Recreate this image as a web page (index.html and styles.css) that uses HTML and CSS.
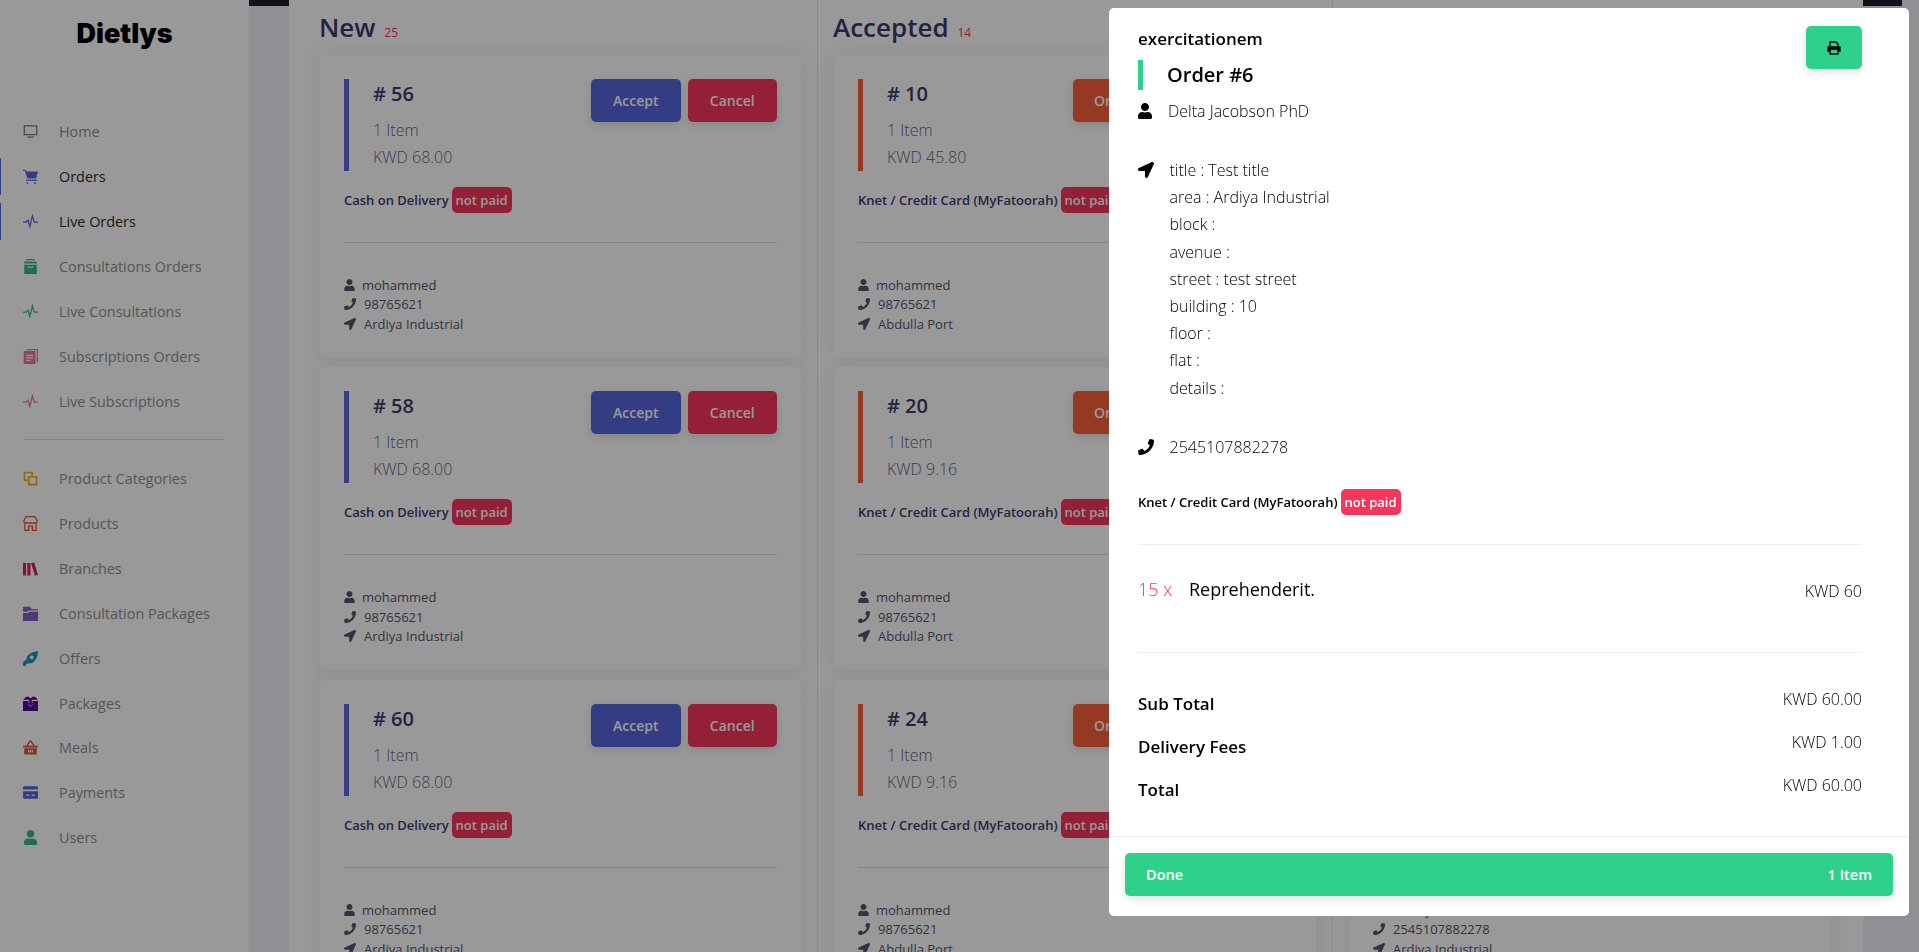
FILE: index.html
```html
<!DOCTYPE html>
<html lang="en">
<head>
    <meta charset="UTF-8">
    <meta name="viewport" content="width=device-width, initial-scale=1.0">
    <title>Dietlys</title>
    <link rel="stylesheet" href="styles.css">
</head>
<body>
    <svg class="defs" aria-hidden="true">
        <symbol id="i-user" viewBox="0 0 448 512"><path d="M224 256c70.7 0 128-57.3 128-128S294.7 0 224 0 96 57.3 96 128s57.3 128 128 128zm89.6 32h-16.7c-22.2 10.2-46.9 16-72.9 16s-50.6-5.8-72.9-16h-16.7C60.2 288 0 348.2 0 422.4V464c0 26.5 21.5 48 48 48h352c26.5 0 48-21.5 48-48v-41.6c0-74.2-60.2-134.4-134.4-134.4z"/></symbol>
        <symbol id="i-phone" viewBox="0 0 512 512"><path d="M493.4 24.6l-104-24c-11.3-2.6-22.9 3.3-27.5 13.9l-48 112c-4.2 9.8-1.4 21.3 6.9 28l60.6 49.6c-36 76.7-98.9 140.5-177.2 177.2l-49.6-60.6c-6.8-8.3-18.2-11.1-28-6.9l-112 48C3.9 366.5-2 378.1.6 389.4l24 104C27.1 504.2 36.7 512 48 512c256.1 0 464-207.5 464-464 0-11.2-7.7-20.9-18.6-23.4z"/></symbol>
        <symbol id="i-arrow" viewBox="0 0 512 512"><path d="M444.52 3.52L28.74 195.42c-47.97 22.39-31.98 92.75 19.19 92.75h175.91v175.91c0 51.17 70.36 67.17 92.75 19.19l191.9-415.78c15.99-38.39-25.59-79.97-63.97-63.97z"/></symbol>
        <symbol id="i-pulse" viewBox="0 0 24 24"><path d="M0 13h5l3-3 3 10 4-17 3 10h6" fill="none" stroke="currentColor" stroke-width="2"/></symbol>
    </svg>

    <div class="page">
        <aside class="sidebar">
            <div class="logo">Dietlys</div>
            <nav class="menu">
                <a class="menu-item"><svg class="ic ic-gray" viewBox="0 0 24 24"><path d="M1 2h22v16H1zM3 4v12h18V4zM7 20h10v2H7z" fill-rule="evenodd"/></svg>Home</a>
                <a class="menu-item active"><svg class="ic ic-blue" viewBox="0 0 24 24"><path d="M0 1h4l1 3h19l-3 11H7L3 3H0z"/><path d="M5 17h18v2H5z"/><circle cx="7" cy="22.500" r="1.500"/><circle cx="19" cy="22.500" r="1.500"/></svg>Orders</a>
                <a class="menu-item active"><svg class="ic ic-blue" viewBox="0 0 24 24"><use href="#i-pulse"/></svg>Live Orders</a>
                <a class="menu-item"><svg class="ic ic-green" viewBox="0 0 24 24"><path d="M5 0h14v2H5zM2 4h20v3H2z"/><path fill-rule="evenodd" d="M2 9h20v15H2zM8 11v2a1 1 0 0 0 1 1h6a1 1 0 0 0 1-1v-2h-1.500v1.500h-5V11z"/></svg>Consultations Orders</a>
                <a class="menu-item"><svg class="ic ic-green" viewBox="0 0 24 24"><use href="#i-pulse"/></svg>Live Consultations</a>
                <a class="menu-item"><svg class="ic ic-pink" viewBox="0 0 24 24"><path d="M6 0h18v21h-2V2H6z"/><path fill-rule="evenodd" d="M1 3h19v21H1zM5 9v2h11V9zM5 13v2h11v-2zM5 17v2h7v-2z"/></svg>Subscriptions Orders</a>
                <a class="menu-item"><svg class="ic ic-pink" viewBox="0 0 24 24"><use href="#i-pulse"/></svg>Live Subscriptions</a>
                <div class="menu-sep"></div>
                <a class="menu-item"><svg class="ic ic-yellow" viewBox="0 0 24 24"><path fill-rule="evenodd" d="M1 1h15v7h7v15H8v-7H1zM3.500 3.500v10H8V8h5.500V3.500zM10.500 10.500v10h10v-10z"/></svg>Product Categories</a>
                <a class="menu-item"><svg class="ic ic-orange" viewBox="0 0 24 24"><path fill="none" stroke="currentColor" stroke-width="2" d="M5 1h14l4 7a3.500 3.500 0 0 1-5.500 2.500 4 4 0 0 1-5.500 0 4 4 0 0 1-5.500 0A3.500 3.500 0 0 1 1 8zM3 11v12h6v-7h6v7h6V11"/></svg>Products</a>
                <a class="menu-item"><svg class="ic ic-red" viewBox="0 0 24 24"><path d="M0 3h5v20H0zM7 3h5v20H7zM13 3.500l5-1.500 6 20-5 1.500z"/></svg>Branches</a>
                <a class="menu-item"><svg class="ic ic-purple" viewBox="0 0 24 24"><path d="M0 1h11l3 4h10v2H9L7 9H0zM0 11h8l2-2h14v15H0z"/></svg>Consultation Packages</a>
                <a class="menu-item"><svg class="ic ic-teal" viewBox="0 0 24 24"><path fill-rule="evenodd" d="M24 0c0 9-3 15-9 19l-4 1-6-6 1-4C10 4 15 1 24 0zM14 7a3 3 0 1 0 .01 0zM0 18l5-5 5 6-5 2-1 3H0z"/></svg>Offers</a>
                <a class="menu-item"><svg class="ic ic-indigo" viewBox="0 0 24 24"><path d="M0 6l5-5h5v5zM14 1h5l5 5H14zM0 8h9v4h-2l5 5 5-5h-2V8h9v16H0zM10 3h4v8h3l-5 5-5-5h3z"/></svg>Packages</a>
                <a class="menu-item"><svg class="ic ic-orange" viewBox="0 0 24 24"><path fill-rule="evenodd" d="M11 0l1 1 1-1 6 9h5v3H0V9h5zM7.500 9h9L12 3zM2 13h20v10H2zM8 16v4h2v-4zM11 16v4h2v-4zM14 16v4h2v-4z"/></svg>Meals</a>
                <a class="menu-item"><svg class="ic ic-blue" viewBox="0 0 24 24"><path fill-rule="evenodd" d="M2 2h20a2 2 0 0 1 2 2v3H0V4a2 2 0 0 1 2-2zM0 10h24v10a2 2 0 0 1-2 2H2a2 2 0 0 1-2-2zM5 15v2h5v-2zM14 15v2h5v-2z"/></svg>Payments</a>
                <a class="menu-item"><svg class="ic ic-green"><use href="#i-user"/></svg>Users</a>
            </nav>
        </aside>

        <main class="main">
            <div class="board">
                <section class="col">
                    <h2 class="col-title">New <small>25</small></h2>
                    <article class="card">
                        <div class="card-head">
                            <div class="card-info"><h3># 56</h3><p>1 Item</p><p>KWD 68.00</p></div>
                            <div class="actions"><button class="btn btn-blue">Accept</button><button class="btn btn-red">Cancel</button></div>
                        </div>
                        <div class="pay">Cash on Delivery <span class="badge">not paid</span></div>
                        <ul class="contact">
                            <li><svg class="ci ci-user"><use href="#i-user"/></svg>mohammed</li>
                            <li><svg class="ci"><use href="#i-phone"/></svg>98765621</li>
                            <li><svg class="ci"><use href="#i-arrow"/></svg>Ardiya Industrial</li>
                        </ul>
                    </article>
                    <article class="card">
                        <div class="card-head">
                            <div class="card-info"><h3># 58</h3><p>1 Item</p><p>KWD 68.00</p></div>
                            <div class="actions"><button class="btn btn-blue">Accept</button><button class="btn btn-red">Cancel</button></div>
                        </div>
                        <div class="pay">Cash on Delivery <span class="badge">not paid</span></div>
                        <ul class="contact">
                            <li><svg class="ci ci-user"><use href="#i-user"/></svg>mohammed</li>
                            <li><svg class="ci"><use href="#i-phone"/></svg>98765621</li>
                            <li><svg class="ci"><use href="#i-arrow"/></svg>Ardiya Industrial</li>
                        </ul>
                    </article>
                    <article class="card">
                        <div class="card-head">
                            <div class="card-info"><h3># 60</h3><p>1 Item</p><p>KWD 68.00</p></div>
                            <div class="actions"><button class="btn btn-blue">Accept</button><button class="btn btn-red">Cancel</button></div>
                        </div>
                        <div class="pay">Cash on Delivery <span class="badge">not paid</span></div>
                        <ul class="contact">
                            <li><svg class="ci ci-user"><use href="#i-user"/></svg>mohammed</li>
                            <li><svg class="ci"><use href="#i-phone"/></svg>98765621</li>
                            <li><svg class="ci"><use href="#i-arrow"/></svg>Ardiya Industrial</li>
                        </ul>
                    </article>
                </section>

                <section class="col">
                    <h2 class="col-title">Accepted <small>14</small></h2>
                    <article class="card card-orange">
                        <div class="card-head">
                            <div class="card-info"><h3># 10</h3><p>1 Item</p><p>KWD 45.80</p></div>
                            <div class="actions"><button class="btn btn-orange">Order Ready</button></div>
                        </div>
                        <div class="pay">Knet / Credit Card (MyFatoorah) <span class="badge">not paid</span></div>
                        <ul class="contact">
                            <li><svg class="ci ci-user"><use href="#i-user"/></svg>mohammed</li>
                            <li><svg class="ci"><use href="#i-phone"/></svg>98765621</li>
                            <li><svg class="ci"><use href="#i-arrow"/></svg>Abdulla Port</li>
                        </ul>
                    </article>
                    <article class="card card-orange">
                        <div class="card-head">
                            <div class="card-info"><h3># 20</h3><p>1 Item</p><p>KWD 9.16</p></div>
                            <div class="actions"><button class="btn btn-orange">Order Ready</button></div>
                        </div>
                        <div class="pay">Knet / Credit Card (MyFatoorah) <span class="badge">not paid</span></div>
                        <ul class="contact">
                            <li><svg class="ci ci-user"><use href="#i-user"/></svg>mohammed</li>
                            <li><svg class="ci"><use href="#i-phone"/></svg>98765621</li>
                            <li><svg class="ci"><use href="#i-arrow"/></svg>Abdulla Port</li>
                        </ul>
                    </article>
                    <article class="card card-orange">
                        <div class="card-head">
                            <div class="card-info"><h3># 24</h3><p>1 Item</p><p>KWD 9.16</p></div>
                            <div class="actions"><button class="btn btn-orange">Order Ready</button></div>
                        </div>
                        <div class="pay">Knet / Credit Card (MyFatoorah) <span class="badge">not paid</span></div>
                        <ul class="contact">
                            <li><svg class="ci ci-user"><use href="#i-user"/></svg>mohammed</li>
                            <li><svg class="ci"><use href="#i-phone"/></svg>98765621</li>
                            <li><svg class="ci"><use href="#i-arrow"/></svg>Abdulla Port</li>
                        </ul>
                    </article>
                </section>

                <section class="col">
                    <h2 class="col-title">On Delivery <small>6</small></h2>
                    <article class="card card-green">
                        <div class="card-head">
                            <div class="card-info"><h3># 6</h3><p>1 Item</p><p>KWD 60.00</p></div>
                        </div>
                        <div class="pay">Knet / Credit Card (MyFatoorah) <span class="badge">not paid</span></div>
                        <ul class="contact">
                            <li><svg class="ci ci-user"><use href="#i-user"/></svg>Delta Jacobson PhD</li>
                            <li><svg class="ci"><use href="#i-phone"/></svg>2545107882278</li>
                            <li><svg class="ci"><use href="#i-arrow"/></svg>Ardiya Industrial</li>
                        </ul>
                    </article>
                    <article class="card card-green">
                        <div class="card-head">
                            <div class="card-info"><h3># 7</h3><p>1 Item</p><p>KWD 60.00</p></div>
                        </div>
                        <div class="pay">Knet / Credit Card (MyFatoorah) <span class="badge">not paid</span></div>
                        <ul class="contact">
                            <li><svg class="ci ci-user"><use href="#i-user"/></svg>Delta Jacobson PhD</li>
                            <li><svg class="ci"><use href="#i-phone"/></svg>2545107882278</li>
                            <li><svg class="ci"><use href="#i-arrow"/></svg>Ardiya Industrial</li>
                        </ul>
                    </article>
                    <article class="card card-green">
                        <div class="card-head">
                            <div class="card-info"><h3># 8</h3><p>1 Item</p><p>KWD 60.00</p></div>
                        </div>
                        <div class="pay">Knet / Credit Card (MyFatoorah) <span class="badge">not paid</span></div>
                        <ul class="contact">
                            <li><svg class="ci ci-user"><use href="#i-user"/></svg>Delta Jacobson PhD</li>
                            <li><svg class="ci"><use href="#i-phone"/></svg>2545107882278</li>
                            <li><svg class="ci"><use href="#i-arrow"/></svg>Ardiya Industrial</li>
                        </ul>
                    </article>
                </section>
            </div>
        </main>
    </div>

    <div class="overlay">
        <div class="modal">
            <div class="modal-body">
                <button class="print-btn">
                    <svg viewBox="0 0 14 14" width="14" height="14"><path d="M3 6V1h6l2 2v3M3 10H1V6h12v4h-2M3 8h8v5H3z" fill="none" stroke="#000" stroke-width="1.300"/><path d="M1 6h12v2.500H1z"/></svg>
                </button>
                <div class="store">exercitationem</div>
                <h3 class="order-no">Order #6</h3>
                <div class="customer"><svg class="mi mi-user"><use href="#i-user"/></svg>Delta Jacobson PhD</div>
                <div class="address">
                    <svg class="mi"><use href="#i-arrow"/></svg>
                    <div class="address-lines">
                        <div>title : Test title</div>
                        <div>area : Ardiya Industrial</div>
                        <div>block :</div>
                        <div>avenue :</div>
                        <div>street : test street</div>
                        <div>building : 10</div>
                        <div>floor :</div>
                        <div>flat :</div>
                        <div>details :</div>
                    </div>
                </div>
                <div class="phone"><svg class="mi"><use href="#i-phone"/></svg>2545107882278</div>
                <div class="pay pay-modal">Knet / Credit Card (MyFatoorah) <span class="badge">not paid</span></div>
                <div class="item-row">
                    <span class="qty">15 x</span>
                    <span class="item-name">Reprehenderit.</span>
                    <span class="item-price">KWD 60</span>
                </div>
                <div class="totals">
                    <div class="total-row"><strong>Sub Total</strong><span>KWD 60.00</span></div>
                    <div class="total-row"><strong>Delivery Fees</strong><span>KWD 1.00</span></div>
                    <div class="total-row"><strong>Total</strong><span>KWD 60.00</span></div>
                </div>
            </div>
            <div class="modal-foot">
                <button class="done-btn"><span>Done</span><span>1 Item</span></button>
            </div>
        </div>
    </div>
</body>
</html>
```

FILE: styles.css
```css
* {
    box-sizing: border-box;
}
html, body {
    height: 100%;
}
body {
    margin: 0;
    overflow: hidden;
    background-color: #eef0f5;
    color: #3f3a6b;
    font-family: "Open Sans", sans-serif;
    font-size: 14px;
}
.defs {
    display: none;
}
h2, h3, p, ul {
    margin: 0;
    padding: 0;
}
button {
    font-family: inherit;
    border: 0;
}

.page {
    display: flex;
    height: 952px;
    overflow: hidden;
}

/* sidebar */
.sidebar {
    flex: 0 0 249px;
    background-color: #fff;
}
.logo {
    height: 113.400px;
    padding-top: 15px;
    text-align: center;
    color: #000;
    font-family: Inter, sans-serif;
    font-weight: 900;
    font-size: 27px;
    line-height: 38px;
}
.menu {
    display: flex;
    flex-direction: column;
}
.menu-item {
    display: flex;
    align-items: center;
    height: 37px;
    margin-bottom: 7.900px;
    padding-left: 23px;
    color: #8f8f8f;
    font-size: 14.400px;
}
.menu-item.active {
    border-left: 1px solid #5867dd;
    padding-left: 22px;
    color: #2c2c2c;
}
.ic {
    flex: 0 0 15px;
    width: 15px;
    height: 15px;
    margin-right: 21px;
    fill: currentColor;
}
.ic-gray { color: #7a7a7a; }
.ic-blue { color: #5867dd; }
.ic-green { color: #2dbd7c; }
.ic-pink { color: #e37b95; }
.ic-yellow { color: #e0b21c; }
.ic-orange { color: #e0563a; }
.ic-red { color: #d3294f; }
.ic-purple { color: #7d60c8; }
.ic-teal { color: #1a9ab5; }
.ic-indigo { color: #4b0e9d; }
.menu-sep {
    height: 1px;
    margin: 11.500px 25px 20px 24px;
    background-color: #ddd;
}

/* main board */
.main {
    flex: 1;
    margin-right: 17px;
    padding: 0 39px 0 40px;
    border-top: 6px solid #1e1e2d;
    background-color: #eef0f5;
}
.board {
    display: flex;
    height: 952px;
    margin-top: -6px;
    background-color: #fff;
}
.col {
    flex: 0 0 528px;
    padding: 0 16px 0 31px;
}
.col + .col {
    flex-basis: 515px;
    padding: 0 16px;
    border-left: 1px solid #e8e8e8;
}
.col-title {
    height: 55px;
    margin-left: -1px;
    padding-top: 8px;
    font-size: 26px;
    font-weight: 600;
    line-height: 38px;
}
.col-title small {
    color: #fd2d5c;
    font-size: 12px;
    font-weight: 400;
    margin-left: 2px;
}

/* order cards */
.card {
    height: 302px;
    margin-bottom: 10.400px;
    padding: 24px;
    border-radius: 5px;
    background-color: #fff;
    box-shadow: 0 0 20px rgba(60, 60, 90, .09);
    --accent: #5867dd;
}
.card-orange { --accent: #fb6039; }
.card-green { --accent: #2ed18a; }
.card-head {
    display: flex;
    justify-content: space-between;
    height: 92px;
}
.card-info {
    padding-left: 24px;
    border-left: 5px solid var(--accent);
}
.card-info h3 {
    height: 34px;
    font-size: 20px;
    font-weight: 600;
    line-height: 30px;
}
.card-info p {
    height: 27px;
    padding-top: 4px;
    color: #66667a;
    font-size: 16px;
    font-weight: 300;
    line-height: 27px;
}
.actions {
    display: flex;
    gap: 7px;
}
.btn {
    height: 43px;
    width: 89.500px;
    border-radius: 5px;
    color: #fff;
    font-size: 14px;
    font-weight: 600;
    box-shadow: 0 3px 8px rgba(0, 0, 0, .12);
}
.btn-blue { background-color: #5867dd; }
.btn-red { background-color: #f5365c; }
.btn-orange {
    width: 219px;
    padding-left: 21px;
    background-color: #fb6039;
    text-align: left;
}
.pay {
    display: flex;
    align-items: center;
    gap: 3px;
    height: 26px;
    margin-top: 16px;
    font-size: 13px;
    font-weight: 600;
    white-space: nowrap;
}
.badge {
    height: 26px;
    padding: 0 4px;
    border-radius: 5px;
    background-color: #f5365c;
    color: #fff;
    font-size: 13px;
    line-height: 26px;
}
.contact {
    margin-top: 29px;
    padding-top: 32px;
    border-top: 1px solid #ddd;
    list-style: none;
    font-size: 13px;
    color: #545470;
}
.contact li {
    display: flex;
    align-items: center;
    height: 19.600px;
}
.ci {
    flex: 0 0 12px;
    width: 12px;
    height: 12px;
    margin-right: 8px;
    fill: currentColor;
}
.ci-user {
    width: 11px;
    flex-basis: 11px;
    margin-right: 7px;
}

/* order dialog over the dimmed page */
.overlay {
    position: fixed;
    top: 0;
    left: 0;
    right: 0;
    bottom: 0;
    background-color: rgba(0, 0, 0, .4);
}
.modal {
    position: absolute;
    top: 8px;
    left: 1109px;
    width: 800px;
    height: 908px;
    border-radius: 5px;
    background-color: #fff;
    color: #000;
}
.modal-body {
    position: relative;
    height: 829px;
    padding: 20px 47px 0 29px;
    border-bottom: 1px solid #ebedf2;
}
.print-btn {
    position: absolute;
    top: 18px;
    right: 47px;
    display: flex;
    align-items: center;
    justify-content: center;
    width: 56px;
    height: 43px;
    border-radius: 5px;
    background-color: #2ed18a;
    box-shadow: 0 3px 8px rgba(0, 0, 0, .12);
}
.store {
    height: 22px;
    font-size: 17px;
    font-weight: 600;
    line-height: 22px;
}
.order-no {
    height: 30px;
    margin-top: 10px;
    padding-left: 24px;
    border-left: 5px solid #2ed18a;
    font-size: 20px;
    font-weight: 600;
    line-height: 30px;
}
.mi {
    flex: 0 0 16px;
    width: 16px;
    height: 16px;
    margin-right: 15.500px;
    fill: #000;
}
.mi-user {
    flex-basis: 14px;
    width: 14px;
    margin-right: 16px;
}
.customer {
    display: flex;
    align-items: center;
    height: 24px;
    margin-top: 9px;
    font-size: 16px;
    font-weight: 300;
    line-height: 24px;
}
.address {
    display: flex;
    height: 244px;
    margin-top: 34px;
    font-size: 16px;
    font-weight: 300;
    line-height: 27.200px;
}
.address .mi {
    margin-top: 5px;
}
.phone {
    display: flex;
    align-items: center;
    height: 27px;
    margin-top: 32px;
    font-size: 16px;
    font-weight: 300;
}
.pay-modal {
    margin-top: 29px;
}
.item-row {
    display: flex;
    align-items: flex-start;
    height: 109px;
    margin-top: 29px;
    padding-top: 32px;
    border-top: 1px solid #ebedf2;
    border-bottom: 1px solid #ebedf2;
}
.qty {
    width: 51px;
    color: #f5365c;
    font-size: 18px;
    font-weight: 300;
}
.item-name {
    flex: 1;
    font-size: 18px;
}
.item-price {
    padding-top: 3px;
    font-size: 16px;
    font-weight: 300;
}
.totals {
    margin-top: 34px;
}
.total-row {
    display: flex;
    justify-content: space-between;
    align-items: flex-start;
    height: 43px;
}
.total-row strong {
    margin-top: 5px;
    font-size: 17px;
    font-weight: 600;
    line-height: 24px;
}
.total-row span {
    font-size: 16px;
    font-weight: 300;
    line-height: 24px;
}
.modal-foot {
    padding: 16px 16px 0;
}
.done-btn {
    display: flex;
    align-items: center;
    justify-content: space-between;
    width: 100%;
    height: 43px;
    padding: 0 21px;
    border-radius: 5px;
    background-color: #2ed18a;
    color: #fff;
    font-size: 14.500px;
    font-weight: 600;
    box-shadow: 0 3px 8px rgba(0, 0, 0, .12);
}
```
